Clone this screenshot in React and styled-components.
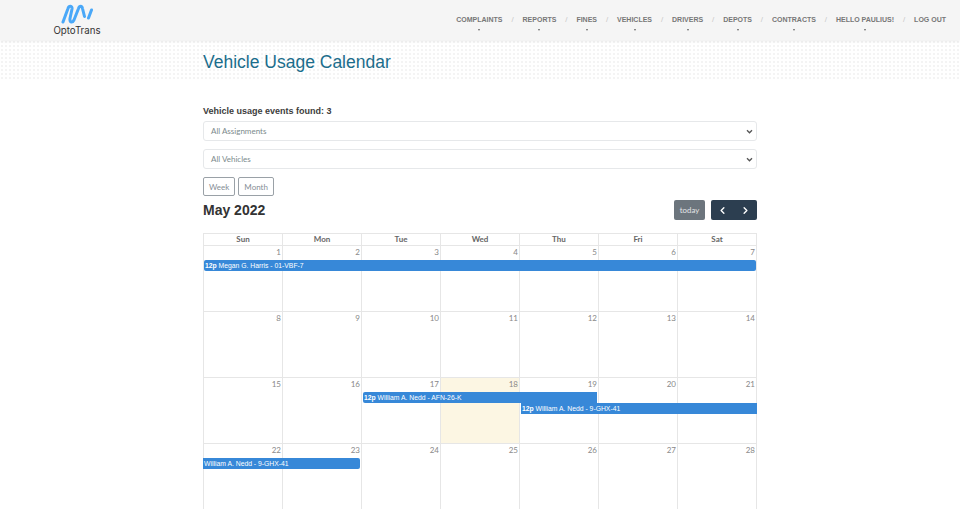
import styled, { createGlobalStyle } from "styled-components";
import { ChevronLeft, ChevronRight } from "lucide-react";

const GlobalStyle = createGlobalStyle`
  html, body {
    margin: 0;
    padding: 0;
    height: 509px;
    overflow: hidden;
    background: #ffffff;
    font-family: "Liberation Sans", Arial, sans-serif;
  }
`;

const Header = styled.header`
  height: 40px;
  background: #f5f5f5;
  box-shadow: 0 1px 3px rgba(0, 0, 0, 0.08);
  display: flex;
  align-items: flex-start;
  justify-content: space-between;
  padding: 0 14px 0 54px;
  position: relative;
  z-index: 1;
`;
const Logo = styled.div`
  width: 46px;
  display: flex;
  flex-direction: column;
  align-items: center;
  padding-top: 3px;
`;
const LogoText = styled.div`
  font-family: Inter, sans-serif;
  font-size: 9.7px;
  line-height: 12px;
  color: #333333;
  margin-top: 1px;
  white-space: nowrap;
`;
const Nav = styled.nav`
  display: flex;
  padding-top: 15px;
`;
const NavGroup = styled.div`
  display: flex;
`;
const NavItem = styled.div`
  display: flex;
  flex-direction: column;
  align-items: center;
  color: #777777;
  font-size: 7px;
  line-height: 10px;
  font-weight: 700;
  white-space: nowrap;
`;
const Caret = styled.span`
  width: 0;
  height: 0;
  margin-top: 4px;
  border-left: 1.5px solid transparent;
  border-right: 1.5px solid transparent;
  border-top: 2px solid #666666;
`;
const Slash = styled.span`
  width: 20px;
  text-align: center;
  color: #c8c8c8;
  font-size: 8px;
  line-height: 10px;
`;
const DotBand = styled.div`
  height: 40px;
  background-color: #ffffff;
  background-image: radial-gradient(#f4f4f4 0.9px, transparent 1px);
  background-size: 4px 4px;
`;
const Main = styled.main`
  width: 554px;
  margin: 0 auto;
  margin-top: -40px;
  position: relative;
`;
const Title = styled.h1`
  margin: 0;
  padding-top: 11px;
  font-size: 17.5px;
  line-height: 22px;
  font-weight: 400;
  color: #1b6d8c;
`;
const Count = styled.div`
  margin-top: 31px;
  font-size: 9px;
  line-height: 14px;
  font-weight: 700;
  color: #3d3d3d;
`;
const SelectBox = styled.div`
  box-sizing: border-box;
  height: 20px;
  margin-top: ${(p) => p.$top}px;
  border: 1px solid #e6e8ea;
  border-radius: 3px;
  display: flex;
  align-items: center;
  justify-content: space-between;
  padding: 0 3px 0 7px;
  font-family: Lato, sans-serif;
  font-size: 8px;
  color: #7b8a8b;
`;
const ViewButtons = styled.div`
  display: flex;
  gap: 3px;
  margin-top: 8px;
`;
const ViewButton = styled.div`
  box-sizing: border-box;
  height: 19px;
  padding: 0 5px;
  border: 1px solid #9aa1a7;
  border-radius: 2px;
  display: flex;
  align-items: center;
  font-family: Lato, sans-serif;
  font-size: 8px;
  color: #868e96;
`;
const Toolbar = styled.div`
  display: flex;
  align-items: center;
  justify-content: space-between;
  margin-top: 4px;
  height: 20px;
`;
const MonthTitle = styled.h2`
  margin: 0;
  font-size: 14px;
  line-height: 20px;
  font-weight: 700;
  color: #333333;
`;
const ToolbarButtons = styled.div`
  display: flex;
  gap: 6px;
`;
const TodayButton = styled.div`
  width: 31px;
  height: 20px;
  background: #6c757d;
  border-radius: 2px;
  display: flex;
  align-items: center;
  justify-content: center;
  font-family: Lato, sans-serif;
  font-size: 7.8px;
  color: #e4e6e8;
`;
const ArrowButtons = styled.div`
  width: 46px;
  height: 20px;
  background: #2c3e50;
  border-radius: 2px;
  display: flex;
  align-items: center;
  justify-content: space-around;
  color: #ffffff;
`;
const Calendar = styled.div`
  margin-top: 13px;
  border-left: 1px solid #e6e6e6;
  border-top: 1px solid #e6e6e6;
`;
const HeadRow = styled.div`
  display: grid;
  grid-template-columns: repeat(7, 1fr);
`;
const HeadCell = styled.div`
  height: 11px;
  border-right: 1px solid #e6e6e6;
  border-bottom: 1px solid #e6e6e6;
  text-align: center;
  font-family: Lato, sans-serif;
  font-size: 8px;
  line-height: 11px;
  font-weight: 700;
  color: #666666;
`;
const Week = styled.div`
  display: grid;
  grid-template-columns: repeat(7, 1fr);
  grid-template-rows: 14px 11px 11px 1fr;
  height: 66px;
`;
const Day = styled.div`
  grid-row: 1 / -1;
  grid-column: ${(p) => p.$col};
  background: ${(p) => (p.$today ? "#fcf6e3" : "transparent")};
  border-right: 1px solid #e6e6e6;
  border-bottom: 1px solid #e6e6e6;
  text-align: right;
  padding: 1px 1px 0 0;
  font-family: Lato, sans-serif;
  font-size: 8px;
  line-height: 11px;
  color: #888888;
`;
const Event = styled.div`
  grid-row: ${(p) => p.$row};
  grid-column: ${(p) => p.$from} / ${(p) => p.$to};
  margin: 0 ${(p) => p.$right}px 0 ${(p) => p.$left}px;
  background: #3788d8;
  border-radius: ${(p) => p.$radius};
  box-sizing: border-box;
  height: 11px;
  padding-left: 1px;
  font-size: 6.8px;
  line-height: 12px;
  color: #ffffff;
  white-space: nowrap;
  overflow: hidden;
  position: relative;
`;

const navItems = [
  "Complaints",
  "Reports",
  "Fines",
  "Vehicles",
  "Drivers",
  "Depots",
  "Contracts",
  "Hello Paulius!",
];

const weeks = [
  { start: 1, events: [{ row: 2, from: 1, to: 8, left: 0, right: 1, radius: "2px", time: "12p", text: "Megan G. Harris - 01-VBF-7" }] },
  { start: 8, events: [] },
  {
    start: 15,
    today: 18,
    events: [
      { row: 2, from: 3, to: 6, left: 1, right: 2, radius: "2px 0 0 2px", time: "12p", text: "William A. Nedd - AFN-26-K" },
      { row: 3, from: 5, to: 8, left: 1, right: 0, radius: "0", time: "12p", text: "William A. Nedd - 9-GHX-41" },
    ],
  },
  { start: 22, events: [{ row: 2, from: 1, to: 3, left: -1, right: 2, radius: "0 2px 2px 0", text: "William A. Nedd - 9-GHX-41" }] },
];

function ChevronDownIcon() {
  return (
    <svg width="7" height="5" viewBox="0 0 8 6" fill="none" stroke="#555555" strokeWidth="1.6">
      <path d="M1 1.5 L4 4.5 L7 1.5" />
    </svg>
  );
}

export default function App() {
  return (
    <>
      <GlobalStyle />
      <Header>
        <Logo>
          <svg width="32" height="21" viewBox="0 0 32 21" fill="none" stroke="#4aa8f8" strokeWidth="3" strokeLinecap="round">
            <path d="M2 19 L7 5.5 C8 2.5 11.5 2.5 11 6 L9 15.5 C8.5 20 11.5 20 13 17 L17.5 5.5 C18.5 2.5 21 2.5 21.5 5.5 L23.5 13.5" />
            <path d="M27.5 15 L30.5 7" />
          </svg>
          <LogoText>OptoTrans</LogoText>
        </Logo>
        <Nav>
          {navItems.map((item) => (
            <NavGroup key={item}>
              <NavItem>
                {item.toUpperCase()}
                <Caret />
              </NavItem>
              <Slash>/</Slash>
            </NavGroup>
          ))}
          <NavItem>LOG OUT</NavItem>
        </Nav>
      </Header>
      <DotBand />
      <Main>
        <Title>Vehicle Usage Calendar</Title>
        <Count>Vehicle usage events found: 3</Count>
        <SelectBox $top={3}>
          All Assignments
          <ChevronDownIcon />
        </SelectBox>
        <SelectBox $top={8}>
          All Vehicles
          <ChevronDownIcon />
        </SelectBox>
        <ViewButtons>
          <ViewButton>Week</ViewButton>
          <ViewButton>Month</ViewButton>
        </ViewButtons>
        <Toolbar>
          <MonthTitle>May 2022</MonthTitle>
          <ToolbarButtons>
            <TodayButton>today</TodayButton>
            <ArrowButtons>
              <ChevronLeft size={11} strokeWidth={3} />
              <ChevronRight size={11} strokeWidth={3} />
            </ArrowButtons>
          </ToolbarButtons>
        </Toolbar>
        <Calendar>
          <HeadRow>
            {["Sun", "Mon", "Tue", "Wed", "Thu", "Fri", "Sat"].map((d) => (
              <HeadCell key={d}>{d}</HeadCell>
            ))}
          </HeadRow>
          {weeks.map((week) => (
            <Week key={week.start}>
              {[0, 1, 2, 3, 4, 5, 6].map((i) => (
                <Day key={i} $col={i + 1} $today={week.start + i === week.today}>
                  {week.start + i}
                </Day>
              ))}
              {week.events.map((ev) => (
                <Event key={ev.text} $row={ev.row} $from={ev.from} $to={ev.to} $left={ev.left} $right={ev.right} $radius={ev.radius}>
                  {ev.time && <b>{ev.time} </b>}
                  {ev.text}
                </Event>
              ))}
            </Week>
          ))}
        </Calendar>
      </Main>
    </>
  );
}
